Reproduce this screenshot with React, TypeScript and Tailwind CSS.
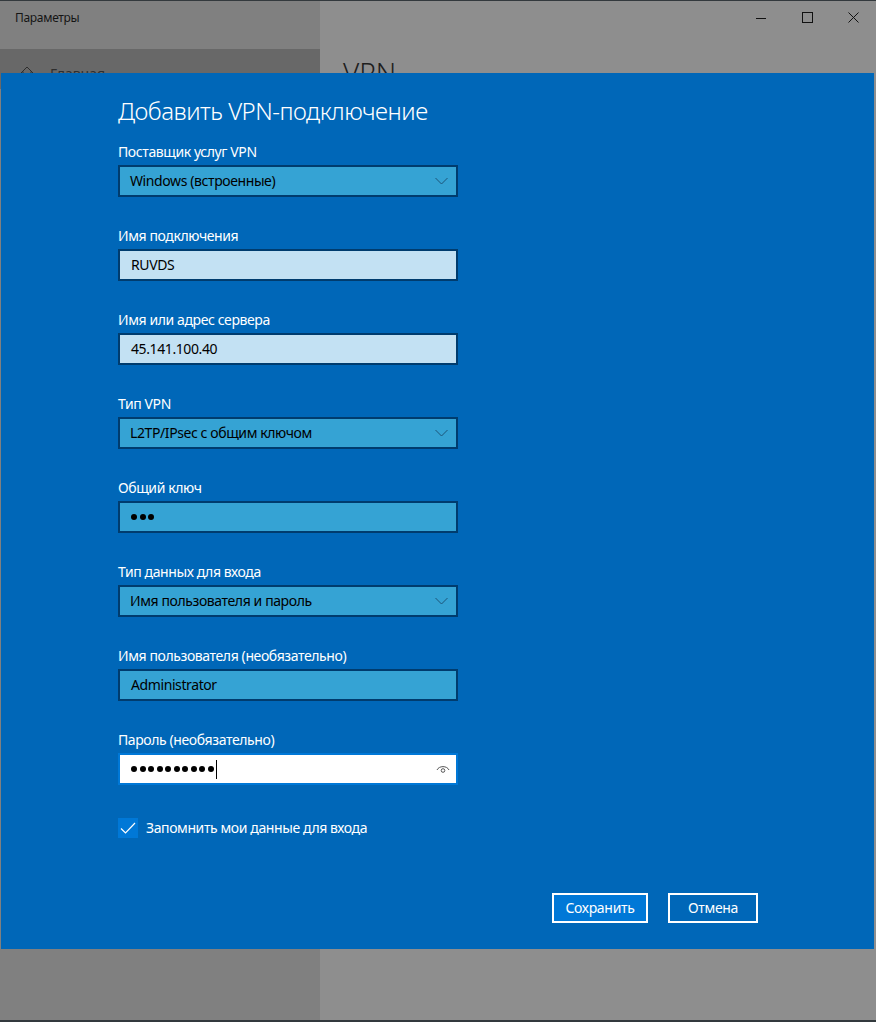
import React from 'react';

const font = { fontFamily: '"Noto Sans", "Open Sans", sans-serif' };

function Chevron() {
    return (
        <svg width="13" height="8" viewBox="0 0 13 8" className="shrink-0">
            <path d="M0.5 1 L6.5 7 L12.5 1" fill="none" stroke="#1c5478" strokeWidth="1" />
        </svg>
    );
}

function Dots({ count }: { count: number }) {
    return (
        <div className="flex items-center gap-[2.5px]">
            {Array.from({ length: count }).map((_, i) => (
                <span key={i} className="block w-[6px] h-[6px] rounded-full bg-black" />
            ))}
        </div>
    );
}

function Label({ children }: { children: React.ReactNode }) {
    return <div className="text-sm leading-5 tracking-[-0.4px] text-white mb-[3px]">{children}</div>;
}

function Select({ value }: { value: string }) {
    return (
        <div className="w-[340px] h-8 border-2 border-[#003c6e] bg-[#35a3d4] flex items-center justify-between pl-[10px] pr-[8px] text-sm tracking-[-0.4px] text-black">
            <span>{value}</span>
            <Chevron />
        </div>
    );
}

function TextField({ value, light }: { value: React.ReactNode; light?: boolean }) {
    return (
        <div className={`w-[340px] h-8 border-2 border-[#003c6e] flex items-center px-[11px] text-sm tracking-[-0.4px] text-black ${light ? 'bg-[#c3e1f3]' : 'bg-[#35a3d4]'}`}>
            {value}
        </div>
    );
}

export default function App() {
    return (
        <div className="relative w-[876px] h-[1022px] overflow-hidden flex border-t border-b-2 border-[#33393d]" style={font}>
            {/* left pane of the settings window */}
            <div className="w-[320px] bg-[#808080] flex flex-col">
                <div className="h-[48px] pt-[9px] pl-[15px] text-xs leading-4 tracking-[-0.3px] text-[#151515]">Параметры</div>
                <div className="h-[40px] bg-[#686868] flex items-start pt-[17px] pl-[20px] gap-[16px] text-sm text-[#2e2e2e]">
                    <svg width="14" height="14" viewBox="0 0 14 14">
                        <path d="M1 7 L7 1 L13 7 M3 5.5 V13 H11 V5.5" fill="none" stroke="#2e2e2e" strokeWidth="1" />
                    </svg>
                    <span className="leading-4">Главная</span>
                </div>
            </div>

            {/* right pane */}
            <div className="flex-1 bg-[#8e8e8e] flex flex-col">
                <div className="h-[33px] flex items-center justify-end">
                    <div className="w-[46px] h-full flex items-center justify-center">
                        <svg width="10" height="10" viewBox="0 0 10 10"><path d="M0 5.5 H10" stroke="#111" strokeWidth="1" /></svg>
                    </div>
                    <div className="w-[46px] h-full flex items-center justify-center">
                        <svg width="11" height="11" viewBox="0 0 11 11"><rect x="0.5" y="0.5" width="10" height="10" fill="none" stroke="#111" strokeWidth="1" /></svg>
                    </div>
                    <div className="w-[46px] h-full flex items-center justify-center">
                        <svg width="11" height="11" viewBox="0 0 11 11"><path d="M0.5 0.5 L10.5 10.5 M10.5 0.5 L0.5 10.5" stroke="#111" strokeWidth="1" /></svg>
                    </div>
                </div>
                <div className="pl-[23px] pt-[22px] text-[28px] leading-8 font-light text-[#1e1e1e]">VPN</div>
            </div>

            {/* dialog */}
            <div className="absolute left-[1px] top-[72px] w-[873px] h-[876px] bg-[#0067b8] flex flex-col pl-[117px] pr-[116px] pt-[22px] pb-[26px]">
                <h1 className="text-[24px] leading-8 font-light tracking-[-0.5px] text-white">Добавить VPN-подключение</h1>

                <div className="mt-[15px] flex flex-col gap-[29px]">
                    <div>
                        <Label>Поставщик услуг VPN</Label>
                        <Select value="Windows (встроенные)" />
                    </div>
                    <div>
                        <Label>Имя подключения</Label>
                        <TextField light value="RUVDS" />
                    </div>
                    <div>
                        <Label>Имя или адрес сервера</Label>
                        <TextField light value="45.141.100.40" />
                    </div>
                    <div>
                        <Label>Тип VPN</Label>
                        <Select value="L2TP/IPsec с общим ключом" />
                    </div>
                    <div>
                        <Label>Общий ключ</Label>
                        <TextField value={<Dots count={3} />} />
                    </div>
                    <div>
                        <Label>Тип данных для входа</Label>
                        <Select value="Имя пользователя и пароль" />
                    </div>
                    <div>
                        <Label>Имя пользователя (необязательно)</Label>
                        <TextField value="Administrator" />
                    </div>
                    <div>
                        <Label>Пароль (необязательно)</Label>
                        <div className="w-[340px] h-8 border-2 border-[#0078d7] bg-white flex items-center justify-between pl-[11px] pr-[6px]">
                            <div className="flex items-center gap-[2px]">
                                <Dots count={10} />
                                <span className="block w-[1px] h-[19px] bg-black" />
                            </div>
                            <svg width="14" height="10" viewBox="0 0 14 10">
                                <path d="M1 6 C3 1.5 11 1.5 13 6" fill="none" stroke="#555" strokeWidth="1" />
                                <circle cx="7" cy="6.5" r="1.8" fill="none" stroke="#555" strokeWidth="1" />
                            </svg>
                        </div>
                    </div>
                </div>

                <label className="mt-[33px] flex items-center gap-[8px] text-sm tracking-[-0.4px] text-white">
                    <span className="w-5 h-5 bg-[#0078d7] flex items-center justify-center">
                        <svg width="16" height="12" viewBox="0 0 16 12">
                            <path d="M1 6.5 L5.5 11 L15 1" fill="none" stroke="#fff" strokeWidth="1.2" />
                        </svg>
                    </span>
                    Запомнить мои данные для входа
                </label>

                <div className="mt-auto self-end flex gap-[20px] text-sm tracking-[-0.3px] text-white">
                    <button className="w-[96px] h-[30px] border-2 border-white bg-[#0078d7]">Сохранить</button>
                    <button className="w-[90px] h-[30px] border-2 border-white">Отмена</button>
                </div>
            </div>
        </div>
    );
}
